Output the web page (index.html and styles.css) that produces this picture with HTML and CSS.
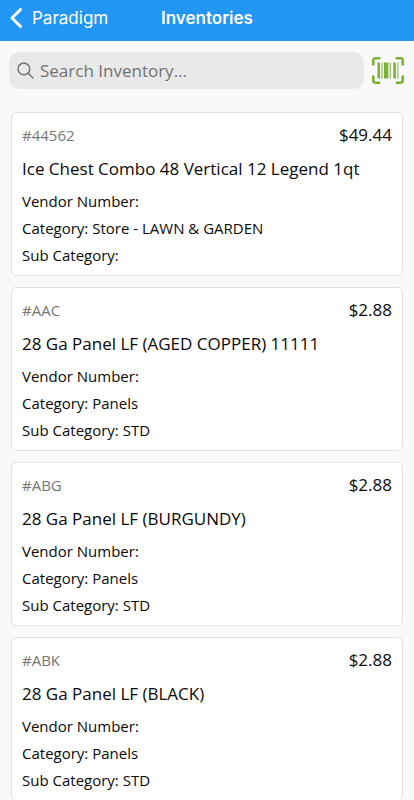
FILE: index.html
```html
<!DOCTYPE html>
<html lang="en">
<head>
    <meta charset="UTF-8">
    <meta name="viewport" content="width=device-width, initial-scale=1.0">
    <title>Inventories</title>
    <link rel="stylesheet" href="styles.css">
</head>
<body>
    <header class="navbar">
        <a href="#" class="back">
            <svg class="backIcon" viewBox="0 0 12 20" aria-hidden="true">
                <path d="M10.5 1.5 2 10l8.5 8.5" />
            </svg>
            <span>Paradigm</span>
        </a>
        <h1 class="pageTitle">Inventories</h1>
    </header>

    <form class="searchBar">
        <div class="searchBox">
            <svg class="searchIcon" viewBox="0 0 18 18" aria-hidden="true">
                <circle cx="7.3" cy="7.3" r="6.2" />
                <path d="m11.900 11.900 5 5" />
            </svg>
            <input type="text" class="searchInput" placeholder="Search Inventory..." aria-label="Search Inventory">
        </div>
        <button type="button" class="scanButton" aria-label="Scan barcode">
            <svg class="scanIcon" viewBox="0 0 32 27" aria-hidden="true">
                <path class="corners" d="M1.300 7.500V3.300a2 2 0 0 1 2-2H7.300M24.700 1.300h4a2 2 0 0 1 2 2V7.500M30.700 19.500v4.200a2 2 0 0 1-2 2h-4M7.300 25.700H3.300a2 2 0 0 1-2-2V19.500" />
                <path d="M5.500 5.500h2.500v16H5.500zM9.500 5.500h1v16h-1zM12 5.500h4.300v16H12zM17.700 5.500h1v16h-1zM21.300 5.500h2.600v16h-2.600zM25.400 5.500h1v16h-1z" />
            </svg>
        </button>
    </form>

    <main class="inventoryList">
        <article class="card">
            <div class="cardTop">
                <span class="sku">#44562</span>
                <span class="price">$49.44</span>
            </div>
            <h2 class="itemName">Ice Chest Combo 48 Vertical 12 Legend 1qt</h2>
            <p class="detail">Vendor Number:</p>
            <p class="detail">Category: Store - LAWN &amp; GARDEN</p>
            <p class="detail">Sub Category:</p>
        </article>

        <article class="card">
            <div class="cardTop">
                <span class="sku">#AAC</span>
                <span class="price">$2.88</span>
            </div>
            <h2 class="itemName">28 Ga Panel LF (AGED COPPER) 11111</h2>
            <p class="detail">Vendor Number:</p>
            <p class="detail">Category: Panels</p>
            <p class="detail">Sub Category: STD</p>
        </article>

        <article class="card">
            <div class="cardTop">
                <span class="sku">#ABG</span>
                <span class="price">$2.88</span>
            </div>
            <h2 class="itemName">28 Ga Panel LF (BURGUNDY)</h2>
            <p class="detail">Vendor Number:</p>
            <p class="detail">Category: Panels</p>
            <p class="detail">Sub Category: STD</p>
        </article>

        <article class="card">
            <div class="cardTop">
                <span class="sku">#ABK</span>
                <span class="price">$2.88</span>
            </div>
            <h2 class="itemName">28 Ga Panel LF (BLACK)</h2>
            <p class="detail">Vendor Number:</p>
            <p class="detail">Category: Panels</p>
            <p class="detail">Sub Category: STD</p>
        </article>
    </main>
</body>
</html>
```
FILE: styles.css
```css
* {
    box-sizing: border-box;
}

body {
    font-family: 'Open Sans', 'Noto Sans', sans-serif;
    margin: 0;
    height: 100vh;
    display: flex;
    flex-direction: column;
    background-color: #f9f9fb;
    color: #0a0a0a;
}

.navbar {
    display: grid;
    grid-template-columns: 1fr auto 1fr;
    align-items: center;
    flex-shrink: 0;
    height: 41px;
    padding: 0 10px 5px;
    background-color: #2196f3;
    color: #ffffff;
    font-family: Inter, 'Liberation Sans', sans-serif;
    font-size: 17px;
}

.back {
    display: flex;
    align-items: center;
    gap: 10px;
    color: #ffffff;
    text-decoration: none;
}

.backIcon {
    width: 12px;
    height: 20px;
    fill: none;
    stroke: #ffffff;
    stroke-width: 3;
    stroke-linecap: round;
    stroke-linejoin: round;
}

.pageTitle {
    margin: 0;
    font-size: 17px;
    font-weight: 600;
}

.searchBar {
    display: flex;
    align-items: center;
    flex-shrink: 0;
    gap: 8px;
    padding: 11px 10px 12px 9px;
}

.searchBox {
    display: flex;
    align-items: center;
    flex: 1;
    gap: 6px;
    height: 37px;
    padding: 0 8px;
    border-radius: 10px;
    background-color: #e9e9e9;
}

.searchIcon {
    width: 17px;
    height: 17px;
    fill: none;
    stroke: #727272;
    stroke-width: 1.5;
    stroke-linecap: round;
}

.searchInput {
    flex: 1;
    min-width: 0;
    padding: 0;
    border: none;
    outline: none;
    background: none;
    font-family: inherit;
    font-size: 17px;
    color: #0a0a0a;
}

.searchInput::placeholder {
    color: #727272;
    opacity: 1;
}

.scanButton {
    display: flex;
    padding: 0;
    border: none;
    background: none;
    cursor: pointer;
}

.scanIcon {
    width: 32px;
    height: 27px;
    fill: #7cb237;
}

.corners {
    fill: none;
    stroke: #7cb237;
    stroke-width: 2.6;
    stroke-linecap: round;
}

.inventoryList {
    display: flex;
    flex-direction: column;
    flex: 1;
    min-height: 0;
    gap: 11px;
    padding: 11px 11px 0;
    overflow-y: auto;
    scrollbar-width: none;
}

.card {
    flex-shrink: 0;
    padding: 10px 10px 6px;
    border: 1px solid #e1e1e3;
    border-radius: 5px;
    background-color: #ffffff;
}

.cardTop {
    display: flex;
    align-items: center;
    justify-content: space-between;
    line-height: 24px;
}

.sku {
    font-size: 15px;
    color: #757575;
}

.price {
    font-size: 17px;
}

.itemName {
    margin: 10px 0 7px;
    font-size: 17px;
    font-weight: 400;
    line-height: 24px;
}

.detail {
    margin: 0;
    font-size: 15px;
    line-height: 27px;
}
```
